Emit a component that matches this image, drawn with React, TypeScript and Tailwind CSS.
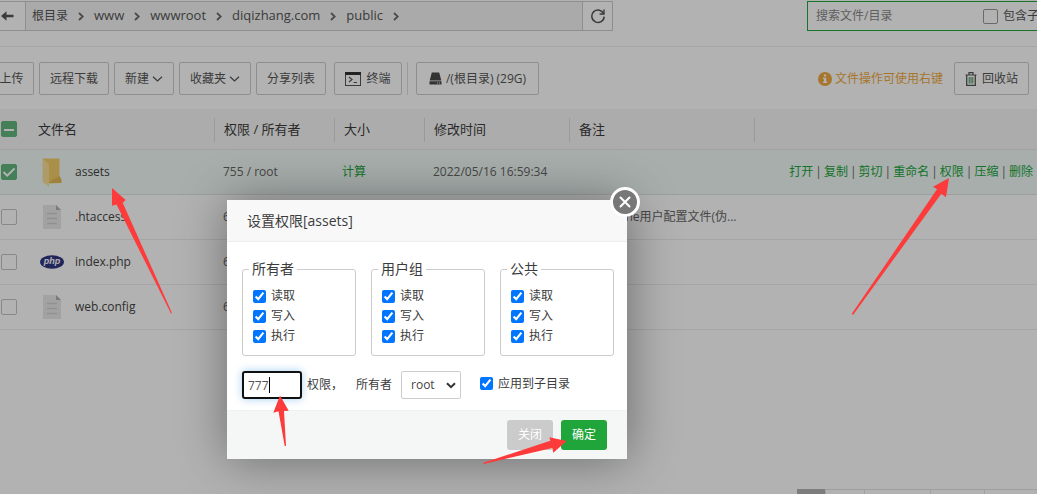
import React, { useState } from "react";

const green = "text-[#20a53a]";

function Chevron() {
  return (
    <svg className="mx-[10px] h-[9px] w-[6px] shrink-0" viewBox="0 0 6 9" fill="none" stroke="#6a6a6a" strokeWidth="1.8">
      <path d="M1 1 L4.8 4.5 L1 8" />
    </svg>
  );
}

function DownCaret() {
  return (
    <svg className="ml-[3px] h-[6px] w-[11px]" viewBox="0 0 11 6" fill="none" stroke="#555" strokeWidth="1.2">
      <path d="M1 0.8 L5.5 5 L10 0.8" />
    </svg>
  );
}

function TrashIcon() {
  return (
    <svg className="h-[14px] w-[12px]" viewBox="0 0 12 14" fill="none" stroke="#555">
      <path d="M.5 3h11M4 2.5V.7h4v1.8" strokeWidth="1.2" />
      <path d="M1.7 3v10.3h8.6V3" strokeWidth="1.3" />
      <path d="M4.2 5v6.6M6 5v6.6M7.8 5v6.6" stroke="#3f8a55" strokeWidth="1" />
    </svg>
  );
}

function FolderIcon() {
  return (
    <svg className="h-[30px] w-[24px]" viewBox="0 0 24 30">
      <path d="M3 1.5h16.5v20l1.8.2V26l-14 .5L3 25z" fill="#f3cd68" />
      <path d="M19.5 19l1.8 3.5V26H9v-1z" fill="#e2b954" />
      <path d="M2.5 1.5L9 7v22.5L2.5 25z" fill="#fadf98" />
    </svg>
  );
}

function FileIcon() {
  return (
    <svg className="h-[24px] w-[24px]" viewBox="0 0 24 24">
      <path d="M3 0h13l5 5v19H3z" fill="#e8e8e8" />
      <path d="M16 0l5 5h-5z" fill="#b0b0b0" />
      <path d="M7 8.5h10M7 13.5h10M7 18.5h10" stroke="#cfcfcf" strokeWidth="1.5" />
    </svg>
  );
}

function PhpIcon() {
  return (
    <svg className="h-[14px] w-[24px]" viewBox="0 0 24 14">
      <ellipse cx="12" cy="7" rx="12" ry="6.8" fill="#2f3584" />
      <text x="12" y="9.4" textAnchor="middle" fill="#fff" fontSize="9" fontWeight="bold" fontStyle="italic" fontFamily="Liberation Sans, sans-serif">
        php
      </text>
    </svg>
  );
}

function RowCheck({ checked = false, mixed = false, label }: { checked?: boolean; mixed?: boolean; label: string }) {
  const [on, setOn] = useState(checked);
  return (
    <span className="relative flex h-4 w-4">
      <input
        type="checkbox"
        aria-label={label}
        checked={on}
        onChange={(e) => setOn(e.target.checked)}
        className="h-4 w-4 appearance-none rounded-[2px] border border-[#c3c3c3] bg-white checked:border-[#62b67d] checked:bg-[#62b67d]"
      />
      {on && (
        <svg className="pointer-events-none absolute inset-0 h-4 w-4" viewBox="0 0 16 16" fill="none" stroke="#fff" strokeWidth="2">
          <path d={mixed ? "M3 9h10" : "M2.5 8l3.7 3.7L13.5 4.5"} />
        </svg>
      )}
    </span>
  );
}

const toolBtn =
  "flex h-[33px] shrink-0 items-center justify-center whitespace-nowrap rounded-[2px] border border-[#ccc] bg-white text-xs text-[#555]";

const crumbs = ["根目录", "www", "wwwroot", "diqizhang.com", "public"];
const headings = ["权限 / 所有者", "大小", "修改时间", "备注"];
const actions = ["打开", "复制", "剪切", "重命名", "权限", "压缩", "删除"];
const files = [
  { name: "assets", icon: <FolderIcon />, perm: "755 / root", size: "计算", time: "2022/05/16 16:59:34", note: "", active: true },
  { name: ".htaccess", icon: <FileIcon />, perm: "644", size: "", time: "", note: "PS: Apache用户配置文件(伪...", active: false },
  { name: "index.php", icon: <PhpIcon />, perm: "644", size: "", time: "", note: "", active: false },
  { name: "web.config", icon: <FileIcon />, perm: "644", size: "", time: "", note: "", active: false },
];

function PathBar() {
  return (
    <div className="flex items-start justify-between overflow-hidden border-b border-[#eee] pb-[15px] pt-px">
      <div className="flex h-[30px] w-[613px] shrink-0 border border-l-0 border-[#ccc]">
        <button aria-label="返回" className="flex w-[26px] items-center border-r border-[#ccc]">
          <svg className="ml-px h-[10px] w-[13px]" viewBox="0 0 13 10" fill="#555">
            <path d="M0 5L5.5 .3V3.7H12.5V6.3H5.5V9.7z" />
          </svg>
        </button>
        <nav className="flex grow items-center bg-[#f4f4f4] pl-[6px] text-[#555]">
          {crumbs.map((c, i) => (
            <React.Fragment key={c}>
              <a href="#" className={i === 0 ? "text-xs" : "text-[13px]"}>
                {c}
              </a>
              <Chevron />
            </React.Fragment>
          ))}
        </nav>
        <button aria-label="刷新" className="flex w-[30px] items-center justify-center border-l border-[#ccc]">
          <svg className="h-4 w-4" viewBox="0 0 16 16" fill="none" stroke="#555" strokeWidth="1.5">
            <path d="M13.8 6A6.2 6.2 0 1 0 14.2 8.6" />
            <path d="M14 1.5V6H9.6" strokeWidth="1.4" />
          </svg>
        </button>
      </div>
      <div className="-mr-10 flex h-[30px] w-[270px] shrink-0 items-center border border-[#20a53a] pl-2 text-xs">
        <input
          aria-label="搜索文件/目录"
          placeholder="搜索文件/目录"
          className="w-[167px] bg-transparent outline-none placeholder:text-[#888]"
        />
        <label className="flex shrink-0 items-center gap-[5px] whitespace-nowrap text-[#555]">
          <input type="checkbox" className="h-[15px] w-[15px] appearance-none rounded-[2px] border border-[#999]" />
          包含子目录
        </label>
      </div>
    </div>
  );
}

function Toolbar() {
  return (
    <div className="flex items-center pb-[14px] pr-2 pt-[15px]">
      <button className={`${toolBtn} w-[34px] rounded-l-none border-l-0 pr-[10px]`}>上传</button>
      <div className="ml-[5px] flex shrink-0 items-center gap-[5px]">
        <button className={`${toolBtn} w-[70px]`}>远程下载</button>
        <button className={`${toolBtn} w-[60px]`}>
          新建
          <DownCaret />
        </button>
        <button className={`${toolBtn} w-[72px]`}>
          收藏夹
          <DownCaret />
        </button>
        <button className={`${toolBtn} w-[70px]`}>分享列表</button>
      </div>
      <div className="ml-2 flex h-[33px] shrink-0 items-start border-r border-[#ddd] pr-[5px]">
        <button className={`${toolBtn} h-8 w-[68px] gap-[5px]`}>
          <svg className="h-[14px] w-4" viewBox="0 0 16 14" fill="none" stroke="#555">
            <rect x=".5" y=".5" width="15" height="13" />
            <path d="M0 1.5h16" stroke="#333" strokeWidth="3" />
            <path d="M4 5l3 2.5L4 10M8.5 10.5H12" strokeWidth="1.2" />
          </svg>
          终端
        </button>
      </div>
      <button className={`${toolBtn} ml-2 w-[123px] gap-[4px]`}>
        <svg className="h-[13px] w-[13px]" viewBox="0 0 13 13" fill="#4a4a4a">
          <path d="M2.8.5h7.4L12.3 8.5H.7z" />
          <path fillRule="evenodd" d="M.5 9.3h12v3.2H.5zM8 10.5v.9h.9v-.9zM10 10.5v.9h.9v-.9z" />
        </svg>
        /(根目录) (29G)
      </button>
      <div className="ml-auto flex shrink-0 items-center gap-[11px]">
        <span className="flex items-center gap-[3px] text-xs text-[#f0a940]">
          <svg className="h-[14px] w-[14px]" viewBox="0 0 14 14">
            <circle cx="7" cy="7" r="7" fill="#f0a940" />
            <path d="M5.9 2.6h2.3v1.9H5.9zM5 5.7h3.2v3.9h1v1.5H5V9.6h1V7.2H5z" fill="#fff" />
          </svg>
          文件操作可使用右键
        </span>
        <button className={`${toolBtn} w-[75px] gap-[5px]`}>
          <TrashIcon />
          回收站
        </button>
      </div>
    </div>
  );
}

function FileTable() {
  return (
    <table className="w-full table-fixed border-collapse text-left">
      <colgroup>
        <col className="w-[38px]" />
        <col className="w-[177px]" />
        <col className="w-[120px]" />
        <col className="w-[90px]" />
        <col className="w-[145px]" />
        <col className="w-[185px]" />
        <col />
      </colgroup>
      <thead>
        <tr className="h-[40px] border-b border-[#e9e9e9] bg-[#f6f6f6] text-[13px] text-[#3c3c3c]">
          <th className="p-0 pl-px">
            <RowCheck checked mixed label="全选" />
          </th>
          <th className="p-0 pt-[2px] font-normal">
            <div className="flex h-6 items-center border-r border-[#ddd]">文件名</div>
          </th>
          {headings.map((h) => (
            <th key={h} className="p-0 pt-[2px] font-normal">
              <div className="flex h-6 items-center border-r border-[#ddd] pl-[9px]">{h}</div>
            </th>
          ))}
          <th className="p-0" aria-label="操作" />
        </tr>
      </thead>
      <tbody>
        {files.map((f) => (
          <tr key={f.name} className={`h-[45px] border-b text-xs text-[#666] ${f.active ? "border-[#dde6e2] bg-[#f0faf6]" : "border-[#ececec]"}`}>
            <td className="p-0 pl-px">
              <RowCheck checked={f.active} label={f.name} />
            </td>
            <td className="p-0">
              <a href="#" className="flex items-center gap-[11px] pl-[2px] text-[#444]">
                {f.icon}
                {f.name}
              </a>
            </td>
            <td className="p-0 pl-2">{f.perm}</td>
            <td className={`p-0 pl-[7px] ${green}`}>{f.size}</td>
            <td className="p-0 pl-2">{f.time}</td>
            <td className="whitespace-nowrap p-0 pl-2">{f.note}</td>
            <td className="whitespace-nowrap p-0 pr-1 text-right">
              {f.active &&
                actions.map((a, i) => (
                  <React.Fragment key={a}>
                    {i > 0 && <span className="px-[2px]">|</span>}
                    <a href="#" className={green}>
                      {a}
                    </a>
                  </React.Fragment>
                ))}
            </td>
          </tr>
        ))}
      </tbody>
    </table>
  );
}

function Pager() {
  return (
    <div className="mt-auto flex h-[5px] justify-end overflow-hidden">
      <span className="w-[28px] bg-[#b4b4b4]" />
      <span className="w-[40px] border border-b-0 border-[#e4e4e4]" />
      <span className="w-[66px] border-r border-t border-[#e4e4e4]" />
      <span className="w-[54px] border-r border-t border-[#e4e4e4]" />
      <span className="w-[52px] border-t border-[#e4e4e4]" />
    </div>
  );
}

function Tick({ label }: { label: string }) {
  return (
    <label className="flex h-5 items-center gap-[5px] text-xs">
      <input type="checkbox" defaultChecked className="h-[13px] w-[13px] accent-[#0075ff]" />
      {label}
    </label>
  );
}

function PermissionDialog() {
  return (
    <div role="dialog" aria-label="设置权限[assets]" className="absolute left-[227px] top-[200px] w-[400px] rounded-[2px] bg-white text-[#3c3c3c] shadow-[1px_1px_50px_rgba(0,0,0,0.4)]">
      <h2 className="flex h-[42px] items-center border-b border-[#eee] bg-[#f8f8f8] pl-5 text-[14px]">设置权限[assets]</h2>
      <button aria-label="关闭窗口" className="absolute -right-[13px] -top-[13px] flex h-[30px] w-[30px] items-center justify-center rounded-full border-[3px] border-white bg-[#787878]">
        <svg className="h-[12px] w-[12px]" viewBox="0 0 12 12" stroke="#fff" strokeWidth="2" strokeLinecap="round">
          <path d="M1.5 1.5l9 9M10.5 1.5l-9 9" />
        </svg>
      </button>
      <div className="pb-[11px] pl-[15px] pt-[17px]">
        <div className="flex gap-[15px]">
          {["所有者", "用户组", "公共"].map((g) => (
            <fieldset key={g} className="w-[114px] shrink-0 rounded-[3px] border border-[#ccc] pb-[9px] pl-[10px] pt-[7px]">
              <legend className="-ml-[4px] h-5 px-[3px] text-[14px] leading-5">{g}</legend>
              <Tick label="读取" />
              <Tick label="写入" />
              <Tick label="执行" />
            </fieldset>
          ))}
        </div>
        <div className="mt-[15px] flex items-center text-xs">
          <label className="flex items-center gap-[5px]">
            <span className="relative flex">
              <input
                type="text"
                defaultValue="777"
                className="h-7 w-[60px] rounded-[3px] border-2 border-[#101010] bg-white pl-1 text-[#555] shadow-[0_0_8px_rgba(102,175,233,0.6)] outline-none"
              />
              <span className="absolute left-[27px] top-[6px] h-4 w-px bg-black" />
            </span>
            权限，
          </label>
          <label className="ml-[13px] flex items-center gap-[9px]">
            所有者
            <span className="relative flex items-center">
              <select className="h-7 w-[60px] appearance-none rounded-[2px] border border-[#ccc] bg-white pl-[9px] text-[#444]">
                <option>root</option>
              </select>
              <svg className="pointer-events-none absolute right-[5px] h-[7px] w-[10px]" viewBox="0 0 10 7" fill="none" stroke="#333" strokeWidth="2">
                <path d="M1 1.2l4 4 4-4" />
              </svg>
            </span>
          </label>
          <div className="ml-[19px] pb-[3px]">
            <Tick label="应用到子目录" />
          </div>
        </div>
      </div>
      <div className="flex h-[49px] items-center justify-end gap-[8px] border-t border-[#edf1f2] bg-[#f5f7f7] pr-5 text-xs text-white">
        <button className="h-[30px] w-[46px] rounded-[3px] bg-[#cbcbcb]">关闭</button>
        <button className="h-[30px] w-[46px] rounded-[3px] bg-[#20a53a]">确定</button>
      </div>
    </div>
  );
}

function Arrows() {
  return (
    <svg className="pointer-events-none absolute left-0 top-0 h-[494px] w-[1037px]" viewBox="0 0 1037 494" fill="#fd3b3b">
      <path d="M112 188L125.7 200L122.7 202.7L172 313L171 313.5L116.5 204.5L112 205.7z" />
      <path d="M949 178L933 186.7L937 189.3L851.8 313.8L853 315L941.3 193.7L946 197.3z" />
      <path d="M280 395.5L273.3 412.7L278.5 411.3L284.7 446H286L284 411L288.7 410.7z" />
      <path d="M566.7 441L549.3 437.3L550.3 440.7L483.3 462.8L483.7 464L552.3 448L553.3 452.7z" />
    </svg>
  );
}

export default function App() {
  return (
    <div className="relative flex min-h-screen flex-col overflow-hidden bg-white font-['Open_Sans','Noto_Sans_CJK_SC',sans-serif]">
      <PathBar />
      <Toolbar />
      <FileTable />
      <Pager />
      <div className="absolute inset-0 bg-black/30" />
      <PermissionDialog />
      <Arrows />
    </div>
  );
}
